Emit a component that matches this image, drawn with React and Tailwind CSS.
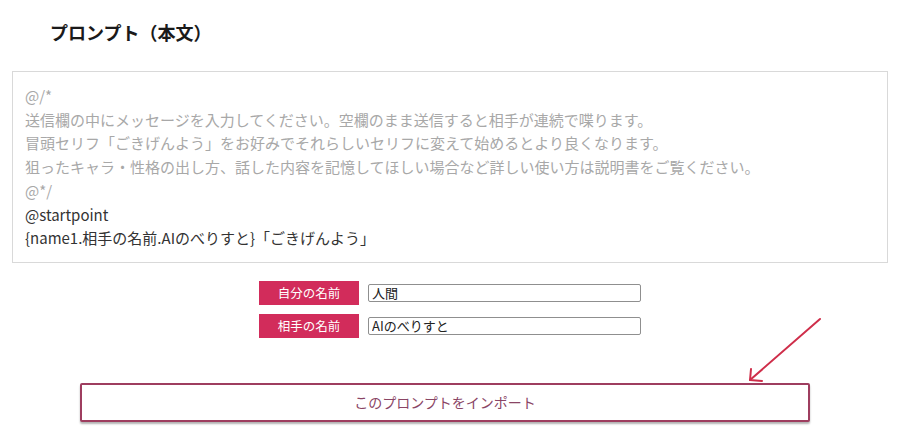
import React from 'react';

const font = { fontFamily: '"Noto Sans CJK JP", "Noto Sans", sans-serif' };

// プロンプト本文の行（灰色 = コメント部分）
const lines = [
    { text: '@/*', muted: true },
    { text: '送信欄の中にメッセージを入力してください。空欄のまま送信すると相手が連続で喋ります。', muted: true },
    { text: '冒頭セリフ「ごきげんよう」をお好みでそれらしいセリフに変えて始めるとより良くなります。', muted: true },
    { text: '狙ったキャラ・性格の出し方、話した内容を記憶してほしい場合など詳しい使い方は説明書をご覧ください。', muted: true },
    { text: '@*/', muted: true },
    { text: '@startpoint', muted: false },
    { text: '{name1.相手の名前.AIのべりすと}「ごきげんよう」', muted: false },
];

function NameRow({ label, value }) {
    return (
        <div className="flex items-center gap-[9px]">
            <div className="flex h-[24px] w-[100px] items-center justify-center bg-[#d22c5b] text-[12.5px] text-white">
                {label}
            </div>
            <input
                readOnly
                value={value}
                className="h-[18px] w-[273px] rounded-[2px] border border-[#8f8f8f] bg-white px-[3px] text-[13px] leading-[16px] text-[#222] outline-none"
                style={font}
            />
        </div>
    );
}

export default function App() {
    return (
        <div className="relative h-[443px] w-[900px] overflow-hidden bg-white" style={font}>
            {/* 見出し */}
            <h2 className="pl-[50px] pt-[20px] text-[18px] font-bold leading-[24px] text-[#1a1a1a]">
                プロンプト（本文）
            </h2>

            {/* 本文ボックス */}
            <div className="mx-[12px] mt-[27px] border border-[#d9d9d9] px-[12px] py-[12px] text-[15px] leading-[23.7px]">
                {lines.map((l, i) => (
                    <div key={i} className={l.muted ? 'text-[#a8a8a8]' : 'text-[#333]'}>
                        {l.text}
                    </div>
                ))}
            </div>

            {/* 名前入力 */}
            <div className="mt-[18px] flex flex-col items-center gap-[9px]">
                <NameRow label="自分の名前" value="人間" />
                <NameRow label="相手の名前" value="AIのべりすと" />
            </div>

            {/* インポートボタン */}
            <button
                className="ml-[80px] mt-[45px] flex h-[39px] w-[730px] items-center justify-center rounded-[2px] border-2 border-[#9e3d5f] bg-white text-[14px] text-[#8a4565] shadow-[0_2px_2px_rgba(0,0,0,0.3)]"
                style={font}
            >
                このプロンプトをインポート
            </button>

            {/* 矢印 */}
            <svg
                className="absolute left-[740px] top-[310px]"
                width="90"
                height="80"
                viewBox="0 0 90 80"
                fill="none"
                stroke="#cf2e4a"
                strokeWidth="2"
                strokeLinecap="round"
                strokeLinejoin="round"
            >
                <path d="M80 9 L10 70" />
                <path d="M11 59 L10 70 L22 71" />
            </svg>
        </div>
    );
}
